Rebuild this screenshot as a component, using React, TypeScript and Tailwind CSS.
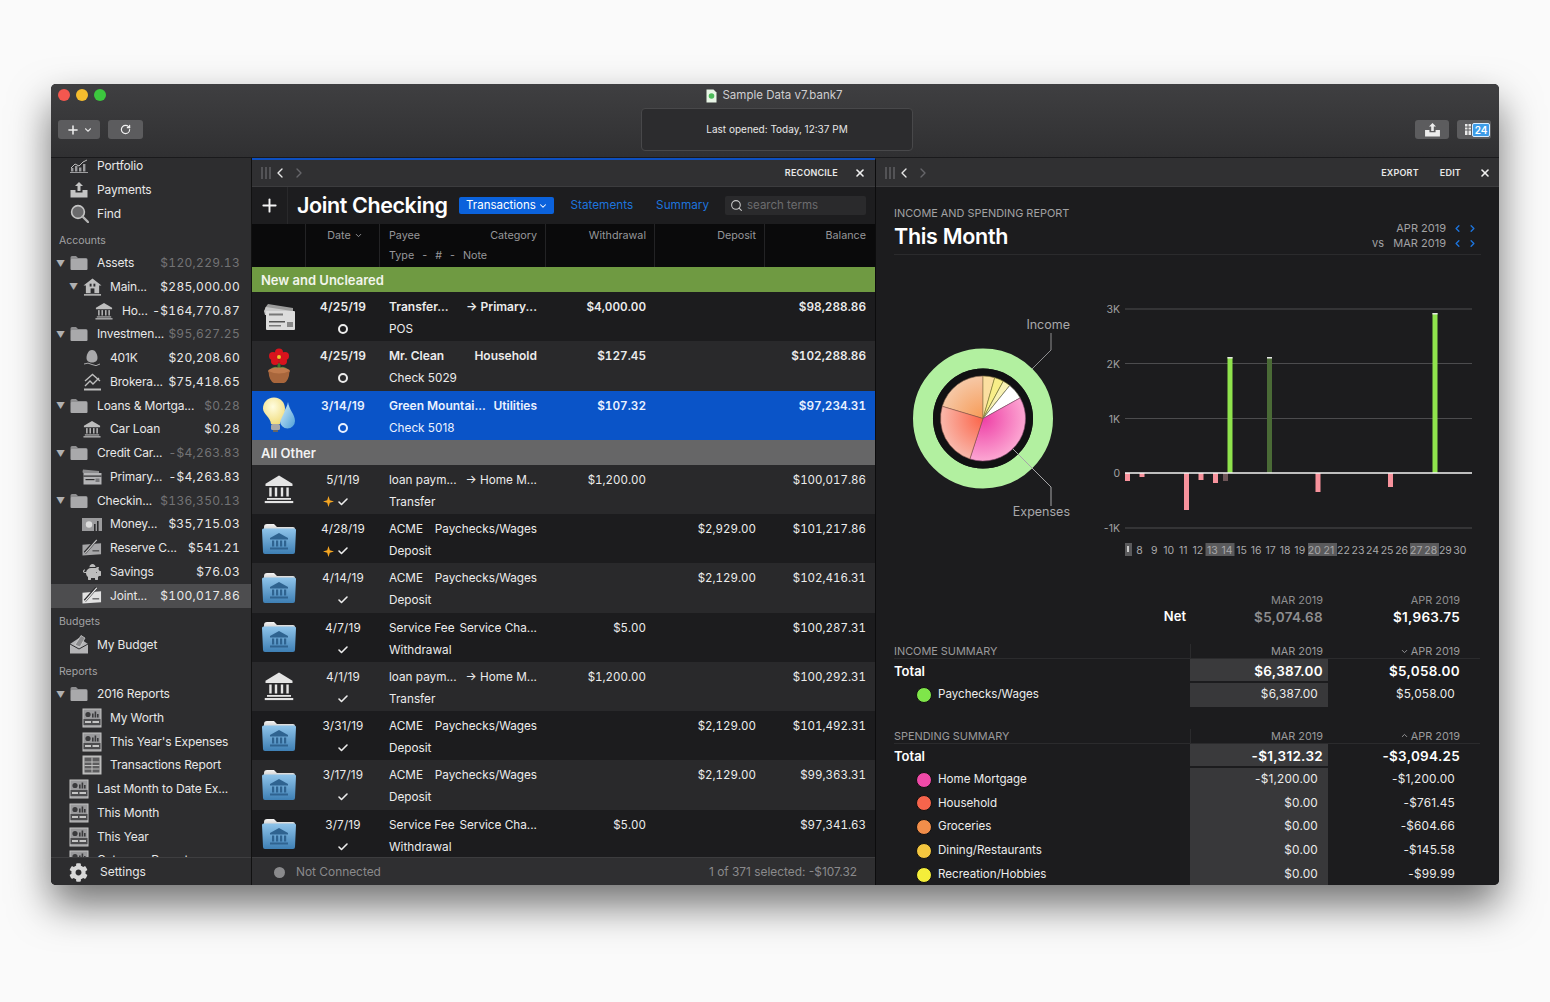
import { ChevronDown, ChevronLeft, ChevronRight, ChevronUp, Check, Plus, RotateCw, Search, X } from 'lucide-react'
import { FaCog, FaPiggyBank } from 'react-icons/fa'

const Temple = ({ color = '#bdbdbd', size = 18 }: { color?: string; size?: number }) => (
  <svg width={size} height={size} viewBox="0 0 20 20" fill={color}>
    <path d="M10 1 19 6.5V8H1V6.5Z" />
    <rect x="3.5" y="9" width="1.6" height="6" />
    <rect x="7.2" y="9" width="1.6" height="6" />
    <rect x="11.2" y="9" width="1.6" height="6" />
    <rect x="14.9" y="9" width="1.6" height="6" />
    <rect x="2" y="16" width="16" height="1.2" />
    <rect x="0.5" y="18" width="19" height="1.4" />
  </svg>
)

const Folder = () => (
  <svg width="18" height="16" viewBox="0 0 18 16">
    <path d="M0.5 2.5Q0.5 1 2 1H6L8 3H16Q17.5 3 17.5 4.5V4.5H0.5Z" fill="#8e8e90" />
    <rect x="0.5" y="4" width="17" height="11" rx="1" fill="#a9a9ab" />
  </svg>
)

const ReportIcon = () => (
  <svg width="20" height="20" viewBox="0 0 20 20">
    <rect x="0.5" y="0.5" width="19" height="19" fill="#c4c4c4" />
    <rect x="1.5" y="1.5" width="17" height="17" fill="#99999b" />
    <circle cx="6" cy="6.5" r="2.6" fill="#3a3a3c" />
    <rect x="10" y="5.5" width="1.6" height="4" fill="#3a3a3c" />
    <rect x="12.6" y="3.5" width="1.6" height="6" fill="#3a3a3c" />
    <rect x="15" y="6" width="1.6" height="3.5" fill="#3a3a3c" />
    <rect x="1.5" y="11" width="17" height="6" fill="#4c4c4e" />
    <rect x="3" y="13" width="6" height="2" fill="#c4c4c4" />
    <rect x="10.5" y="13" width="6.5" height="2" fill="#c4c4c4" />
  </svg>
)

const TableIcon = () => (
  <svg width="20" height="20" viewBox="0 0 20 20">
    <rect x="0.5" y="0.5" width="19" height="19" fill="#bcbcbc" />
    <rect x="2.5" y="2.5" width="15" height="15" fill="#5c5c5e" />
    <path d="M2.5 7H17.5M2.5 10.5H17.5M2.5 14H17.5M10 2.5V17.5" stroke="#bcbcbc" strokeWidth="1" />
  </svg>
)

const CheckbookIcon = ({ bright }: { bright?: boolean }) => (
  <svg width="21" height="18" viewBox="0 0 21 18">
    <path d="M0.5 5.5 20 4V15.5L0.5 17Z" fill={bright ? '#e2e2e2' : '#a6a6a8'} />
    <path d="M3 14 15 0.5" stroke="#2d2d2f" strokeWidth="3" />
    <path d="M3.5 14 15.5 0.5" stroke={bright ? '#f2f2f2' : '#c9c9c9'} strokeWidth="1.2" />
    <path d="M11 12H18" stroke="#2d2d2f" strokeWidth="1" />
  </svg>
)

const SideIcon = ({ name }: { name: string }) => {
  switch (name) {
    case 'folder':
      return <Folder />
    case 'bank':
      return <Temple />
    case 'house':
      return (
        <svg width="19" height="18" viewBox="0 0 20 19" fill="#bdbdbd">
          <path d="M10 0.5 19.5 8H17V16H3V8H0.5Z" />
          <rect x="7" y="6" width="2" height="3" fill="#2d2d2f" />
          <rect x="11" y="6" width="2" height="3" fill="#2d2d2f" />
          <rect x="8" y="11" width="4" height="5" fill="#2d2d2f" />
          <rect x="1" y="17" width="18" height="1.6" />
        </svg>
      )
    case 'portfolio':
      return (
        <svg width="18" height="14" viewBox="0 0 18 14" fill="#9c9c9e">
          <path d="M1 9 5 5 9 7 13 3 17 1" stroke="#bdbdbd" strokeWidth="1" fill="none" />
          <rect x="1" y="9" width="2.4" height="3.5" />
          <rect x="5" y="7" width="2.4" height="5.5" />
          <rect x="9" y="8.5" width="2.4" height="4" />
          <rect x="13" y="5" width="2.4" height="7.5" />
          <rect x="0" y="13" width="18" height="1" />
        </svg>
      )
    case 'payments':
      return (
        <svg width="18" height="16" viewBox="0 0 18 16" fill="#c4c4c4">
          <path d="M9 0 13 4H10.5V9H7.5V4H5Z" />
          <path d="M0.5 8H5.5V10.5H12.5V8H17.5V15.5H0.5Z" />
        </svg>
      )
    case 'find':
      return (
        <svg width="19" height="19" viewBox="0 0 19 19">
          <circle cx="8" cy="8" r="6.4" fill="#6a6a6c" stroke="#c4c4c4" strokeWidth="1.6" />
          <path d="M12.5 12.5 18 18" stroke="#b4b4b4" strokeWidth="2.4" strokeLinecap="round" />
        </svg>
      )
    case 'egg':
      return (
        <svg width="18" height="18" viewBox="0 0 18 18" fill="#a9a9ab">
          <path d="M9 1C13 1 14.5 6 14.5 9C14.5 12 12 13.5 9 13.5C6 13.5 3.5 12 3.5 9C3.5 6 5 1 9 1Z" />
          <path d="M1 15Q5 13 9 15.5T17 15" stroke="#a9a9ab" fill="none" />
        </svg>
      )
    case 'broker':
      return (
        <svg width="19" height="18" viewBox="0 0 19 18" fill="none" stroke="#bdbdbd" strokeWidth="1.4">
          <path d="M2 8 9.5 1.5 17 8" />
          <path d="M2 13 7 8 10 11 16 5" />
          <path d="M1 16.5H18" strokeWidth="2" />
        </svg>
      )
    case 'card':
      return (
        <svg width="20" height="16" viewBox="0 0 20 16">
          <path d="M0.5 3 1 0.5 17 2V4H1Z" fill="#8c8c8e" />
          <rect x="1.5" y="4" width="18" height="11.5" fill="#b4b4b6" />
          <rect x="1.5" y="6.5" width="18" height="1.2" fill="#2d2d2f" />
          <rect x="3.5" y="10" width="9" height="1.2" fill="#2d2d2f" />
          <rect x="13.5" y="9.5" width="4" height="3.5" fill="#77777a" />
        </svg>
      )
    case 'money':
      return (
        <svg width="20" height="15" viewBox="0 0 20 15">
          <rect x="0" y="1" width="20" height="13" fill="#9c9c9e" />
          <circle cx="7" cy="7.5" r="3.2" fill="#dcdcdc" />
          <rect x="12" y="7" width="1.6" height="7" fill="#2d2d2f" />
          <rect x="15" y="4" width="1.6" height="10" fill="#2d2d2f" />
        </svg>
      )
    case 'check':
      return <CheckbookIcon />
    case 'checkOn':
      return <CheckbookIcon bright />
    case 'piggy':
      return <FaPiggyBank size={18} color="#bdbdbd" />
    case 'budget':
      return (
        <svg width="20" height="20" viewBox="0 0 20 20">
          <path d="M1 9 10 3 19 9V18.5H1Z" fill="#b4b4b6" />
          <path d="M1 9 10 14 19 9" stroke="#2d2d2f" fill="none" />
          <path d="M6 10 12 0.5 16 3 11 12Z" fill="#8a8a8c" stroke="#d6d6d6" strokeWidth="0.7" />
        </svg>
      )
    case 'report':
      return <ReportIcon />
    case 'table':
      return <TableIcon />
    default:
      return null
  }
}

type SideRow = { label?: string; amount?: string; level?: 0 | 1 | 2; icon?: string; arrow?: boolean; dim?: boolean; head?: string; on?: boolean }

const sideRows: SideRow[] = [
  { label: 'Portfolio', icon: 'portfolio' },
  { label: 'Payments', icon: 'payments' },
  { label: 'Find', icon: 'find' },
  { head: 'Accounts' },
  { label: 'Assets', amount: '$120,229.13', icon: 'folder', arrow: true, dim: true },
  { label: 'Main...', amount: '$285,000.00', icon: 'house', arrow: true, level: 1 },
  { label: 'Ho...', amount: '-$164,770.87', icon: 'bank', level: 2 },
  { label: 'Investmen...', amount: '$95,627.25', icon: 'folder', arrow: true, dim: true },
  { label: '401K', amount: '$20,208.60', icon: 'egg', level: 1 },
  { label: 'Brokera...', amount: '$75,418.65', icon: 'broker', level: 1 },
  { label: 'Loans & Mortga...', amount: '$0.28', icon: 'folder', arrow: true, dim: true },
  { label: 'Car Loan', amount: '$0.28', icon: 'bank', level: 1 },
  { label: 'Credit Car...', amount: '-$4,263.83', icon: 'folder', arrow: true, dim: true },
  { label: 'Primary...', amount: '-$4,263.83', icon: 'card', level: 1 },
  { label: 'Checkin...', amount: '$136,350.13', icon: 'folder', arrow: true, dim: true },
  { label: 'Money...', amount: '$35,715.03', icon: 'money', level: 1 },
  { label: 'Reserve C...', amount: '$541.21', icon: 'check', level: 1 },
  { label: 'Savings', amount: '$76.03', icon: 'piggy', level: 1 },
  { label: 'Joint...', amount: '$100,017.86', icon: 'checkOn', level: 1, on: true },
  { head: 'Budgets' },
  { label: 'My Budget', icon: 'budget' },
  { head: 'Reports' },
  { label: '2016 Reports', icon: 'folder', arrow: true },
  { label: 'My Worth', icon: 'report', level: 1 },
  { label: "This Year's Expenses", icon: 'report', level: 1 },
  { label: 'Transactions Report', icon: 'table', level: 1 },
  { label: 'Last Month to Date Ex...', icon: 'report' },
  { label: 'This Month', icon: 'report' },
  { label: 'This Year', icon: 'report' },
  { label: 'Category Report', icon: 'report' },
]

const levelPad = ['pl-[5px]', 'pl-[18px]', 'pl-[30px]']

const Sidebar = () => (
  <aside className="w-[201px] shrink-0 flex flex-col bg-[#2d2d2f] border-r border-[#111]">
    <div className="flex-1 min-h-0 overflow-hidden">
      <div className="-mt-[3.5px]">
        {sideRows.map((r, i) =>
          r.head ? (
            <div key={i} className="h-[25.5px] pl-[8px] pt-[4px] flex items-center text-[10.5px] text-[#a2a2a4]">
              {r.head}
            </div>
          ) : (
            <div
              key={i}
              className={`h-[23.75px] flex items-center pr-[11px] text-[12px] ${levelPad[r.level ?? 0]} ${r.on ? 'bg-[#4d4d4f]' : ''}`}
            >
              <span className="w-[15px] shrink-0 text-[9px] leading-none text-[#b0b0b2]">{r.arrow ? '▼' : ''}</span>
              <span className="w-[26px] h-[20px] shrink-0">
                <span className="-ml-[2px] w-[20px] h-[20px] flex items-center justify-center">
                  <SideIcon name={r.icon ?? ''} />
                </span>
              </span>
              <span className="flex-1 whitespace-nowrap tracking-[-0.15px] text-[#e8e8e8]">{r.label}</span>
              {r.amount && (
                <span className={`tabular-nums tracking-[0.3px] ${r.dim ? 'text-[#737375]' : 'text-[#e8e8e8]'}`}>{r.amount}</span>
              )}
            </div>
          ),
        )}
      </div>
    </div>
    <div className="h-[28px] shrink-0 flex items-center pt-[1px] pl-[18px] gap-[12px] bg-[#2d2d2f] border-t border-[#3e3e40] text-[12px] text-[#e8e8e8]">
      <FaCog size={19} color="#d8d8d8" />
      <span>Settings</span>
    </div>
  </aside>
)

const PaneNav = ({ children }: { children: React.ReactNode }) => (
  <div className="h-[27px] shrink-0 flex items-center bg-[#303032] border-b border-[#3c3c3e] pl-[9px] pr-[8px]">
    <svg width="10" height="12" viewBox="0 0 10 12" stroke="#77777a">
      <path d="M1 0V12M5 0V12M9 0V12" />
    </svg>
    <ChevronLeft size={16} strokeWidth={2} color="#e8e8e8" className="ml-[1px]" />
    <ChevronRight size={16} strokeWidth={2} color="#66666a" className="ml-[3px]" />
    <div className="flex-1" />
    {children}
  </div>
)

const CardArt = () => (
  <svg width="33" height="30" viewBox="0 0 33 30">
    <path d="M2 6 5 2 30 6V10H3Z" fill="#9c9c9c" />
    <path d="M1 9 3 5 29 9V13H2Z" fill="#c9c9c9" />
    <rect x="3" y="9" width="29" height="19" rx="1" fill="#dcdcdc" />
    <rect x="6" y="11.5" width="14" height="2" fill="#777" />
    <rect x="6" y="19" width="16" height="1.5" fill="#555" />
    <rect x="6" y="23" width="12" height="1.5" fill="#777" />
    <rect x="24" y="20" width="6" height="5" fill="#888" />
  </svg>
)

const FlowerArt = () => (
  <svg width="26" height="36" viewBox="0 0 26 36">
    <path d="M13 15V22" stroke="#3d7a2c" strokeWidth="3" />
    <path d="M4 22Q9 16 13 21Q17 16 22 22Z" fill="#4f8a3a" />
    <g fill="#d8131d">
      <circle cx="13" cy="4.5" r="4" />
      <circle cx="7" cy="8" r="4" />
      <circle cx="19" cy="8" r="4" />
      <circle cx="9" cy="13" r="4" />
      <circle cx="17" cy="13" r="4" />
    </g>
    <circle cx="13" cy="9" r="2" fill="#f2c12a" />
    <ellipse cx="13" cy="23" rx="11" ry="3.5" fill="#c07a4c" />
    <path d="M2.5 23Q3 33 8 35H18Q23 33 23.5 23Q13 28 2.5 23Z" fill="#a8663c" />
  </svg>
)

const BulbArt = () => (
  <svg width="34" height="38" viewBox="0 0 34 36">
    <defs>
      <radialGradient id="bulbFill" cx="0.45" cy="0.35" r="0.7">
        <stop offset="0" stopColor="#fffde0" />
        <stop offset="1" stopColor="#f0dc7c" />
      </radialGradient>
      <linearGradient id="dropFill" x1="0" y1="0" x2="1" y2="1">
        <stop offset="0" stopColor="#d7f0fa" />
        <stop offset="1" stopColor="#4d9fd8" />
      </linearGradient>
    </defs>
    <path d="M26 5C27 13 33 17 33 24A7.5 7.5 0 0 1 18 24C18 17 25 13 26 5Z" fill="url(#dropFill)" />
    <path d="M12 0.5C19 0.5 23 6 23 11.5C23 17 18.5 20 18 27H9C8.5 20 1 17 1 11.5C1 6 5 0.5 12 0.5Z" fill="url(#bulbFill)" />
    <rect x="9" y="27" width="9" height="6" rx="1.5" fill="#a8a8a8" />
    <rect x="11" y="33" width="5" height="2" fill="#666" />
  </svg>
)

const BlueFolder = () => (
  <svg width="36" height="32" viewBox="0 0 36 32">
    <defs>
      <linearGradient id="folderBlue" x1="0" y1="0" x2="0" y2="1">
        <stop offset="0" stopColor="#8fc4ea" />
        <stop offset="1" stopColor="#3e7fb4" />
      </linearGradient>
      <linearGradient id="folderTop" x1="0" y1="0" x2="0" y2="1">
        <stop offset="0" stopColor="#f4f4f4" />
        <stop offset="1" stopColor="#b9b9b9" />
      </linearGradient>
    </defs>
    <path d="M3 4Q3 1 6 1H13L16 4H32Q34 4 34 6V10H3Z" fill="url(#folderTop)" />
    <path d="M1 7Q1 5.5 2.5 5.5H33.5Q35 5.5 35 7L34 29Q34 31 32 31H4Q2 31 2 29Z" fill="url(#folderBlue)" />
    <g fill="#2f6390">
      <path d="M18 10 27 15V16.5H9V15Z" />
      <rect x="11" y="17.5" width="2.2" height="6" />
      <rect x="15" y="17.5" width="2.2" height="6" />
      <rect x="19" y="17.5" width="2.2" height="6" />
      <rect x="23" y="17.5" width="2.2" height="6" />
      <rect x="9" y="24.5" width="18" height="2" />
    </g>
  </svg>
)

type Tx = {
  icon: 'card' | 'flower' | 'bulb' | 'bank' | 'folder'
  date: string
  payee: string
  cat: string
  arrow?: boolean
  note: string
  wd?: string
  dep?: string
  bal: string
  mark: 'ring' | 'check' | 'star'
  bold?: boolean
  sel?: boolean
  light?: boolean
}

const newTx: Tx[] = [
  { icon: 'card', date: '4/25/19', payee: 'Transfer...', cat: 'Primary...', arrow: true, note: 'POS', wd: '$4,000.00', bal: '$98,288.86', mark: 'ring', bold: true },
  { icon: 'flower', date: '4/25/19', payee: 'Mr. Clean', cat: 'Household', note: 'Check 5029', wd: '$127.45', bal: '$102,288.86', mark: 'ring', bold: true, light: true },
  { icon: 'bulb', date: '3/14/19', payee: 'Green Mountai...', cat: 'Utilities', note: 'Check 5018', wd: '$107.32', bal: '$97,234.31', mark: 'ring', bold: true, sel: true },
]

const otherTx: Tx[] = [
  { icon: 'bank', date: '5/1/19', payee: 'loan paym...', cat: 'Home M...', arrow: true, note: 'Transfer', wd: '$1,200.00', bal: '$100,017.86', mark: 'star', light: true },
  { icon: 'folder', date: '4/28/19', payee: 'ACME', cat: 'Paychecks/Wages', note: 'Deposit', dep: '$2,929.00', bal: '$101,217.86', mark: 'star' },
  { icon: 'folder', date: '4/14/19', payee: 'ACME', cat: 'Paychecks/Wages', note: 'Deposit', dep: '$2,129.00', bal: '$102,416.31', mark: 'check', light: true },
  { icon: 'folder', date: '4/7/19', payee: 'Service Fee', cat: 'Service Cha...', note: 'Withdrawal', wd: '$5.00', bal: '$100,287.31', mark: 'check' },
  { icon: 'bank', date: '4/1/19', payee: 'loan paym...', cat: 'Home M...', arrow: true, note: 'Transfer', wd: '$1,200.00', bal: '$100,292.31', mark: 'check', light: true },
  { icon: 'folder', date: '3/31/19', payee: 'ACME', cat: 'Paychecks/Wages', note: 'Deposit', dep: '$2,129.00', bal: '$101,492.31', mark: 'check' },
  { icon: 'folder', date: '3/17/19', payee: 'ACME', cat: 'Paychecks/Wages', note: 'Deposit', dep: '$2,129.00', bal: '$99,363.31', mark: 'check', light: true },
  { icon: 'folder', date: '3/7/19', payee: 'Service Fee', cat: 'Service Cha...', note: 'Withdrawal', wd: '$5.00', bal: '$97,341.63', mark: 'check' },
]

const TxRow = ({ t }: { t: Tx }) => {
  const rowBg = t.sel ? 'bg-[#0a54c8]' : t.light ? 'bg-[#29292b]' : 'bg-[#1c1c1e]'
  const weight = t.bold ? 'font-semibold text-[12px]' : 'font-normal text-[11.75px]'
  const money = t.bold ? 'font-semibold text-[11.75px]' : 'font-normal text-[11.5px]'
  const ink = t.sel ? 'text-[#eaf2ff]' : 'text-[#ececec]'
  return (
    <div className={`h-[49.25px] shrink-0 grid grid-cols-[54px_74px_166px_109px_110px_110px] pt-[4px] text-[11.75px] ${rowBg} ${ink}`}>
      <div className="-mt-[4px] h-[49px] flex items-center justify-center">
        {t.icon === 'card' && <CardArt />}
        {t.icon === 'flower' && <FlowerArt />}
        {t.icon === 'bulb' && <BulbArt />}
        {t.icon === 'bank' && <Temple color="#e4e4e4" size={30} />}
        {t.icon === 'folder' && <BlueFolder />}
      </div>
      <div className="flex flex-col items-center">
        <div className={`h-[22px] leading-[22px] tracking-[0.2px] ${weight}`}>{t.date}</div>
        <div className="h-[22px] flex items-center justify-center">
          {t.mark === 'ring' ? (
            <span className={`w-[10px] h-[10px] rounded-full border-2 ${t.sel ? 'border-[#eaf2ff]' : 'border-[#ececec]'}`} />
          ) : (
            <>
              <span className="w-[17px] flex justify-center">
                {t.mark === 'star' && (
                  <svg width="11" height="11" viewBox="0 0 11 11" fill="#f5a623">
                    <path d="M5.5 0 6.8 4.2 11 5.5 6.8 6.8 5.5 11 4.2 6.8 0 5.5 4.2 4.2Z" />
                  </svg>
                )}
              </span>
              <Check size={12} strokeWidth={3.2} color="#ececec" />
              <span className="w-[17px]" />
            </>
          )}
        </div>
      </div>
      <div className="px-[9px]">
        <div className={`h-[22px] leading-[22px] flex justify-between whitespace-nowrap ${weight}`}>
          <span>{t.payee}</span>
          <span>{t.arrow ? '→ ' : ''}{t.cat}</span>
        </div>
        <div className="h-[22px] leading-[22px]">{t.note}</div>
      </div>
      <div className={`pr-[9px] text-right leading-[22px] tabular-nums ${money}`}>{t.wd}</div>
      <div className={`pr-[9px] text-right leading-[22px] tabular-nums ${money}`}>{t.dep}</div>
      <div className={`pr-[9px] text-right leading-[22px] tabular-nums ${money}`}>{t.bal}</div>
    </div>
  )
}

const Register = () => (
  <section className="w-[623px] shrink-0 flex flex-col border-t-2 border-[#0d4fc0] min-h-0">
    <PaneNav>
      <span className="text-[9px] font-semibold tracking-[0.2px] text-[#e8e8e8]">RECONCILE</span>
      <X size={12} strokeWidth={3.2} color="#f0f0f0" className="ml-[16px] mr-[1px]" />
    </PaneNav>
    <div className="h-[37px] shrink-0 flex items-center bg-[#1d1d1f]">
      <div className="w-[36px] h-full flex items-center justify-center border-r border-[#29292b]">
        <Plus size={21} strokeWidth={2.2} color="#f4f4f4" />
      </div>
      <h1 className="ml-[9px] text-[21.5px] font-semibold tracking-[-0.4px] text-white whitespace-nowrap">Joint Checking</h1>
      <div className="ml-[12px] h-[17px] w-[95px] flex items-center justify-center gap-[2px] rounded-[2px] bg-[#0b62dc] text-[11.5px] text-white">
        Transactions
        <ChevronDown size={10} strokeWidth={2.5} />
      </div>
      <span className="ml-[16px] text-[11.75px] text-[#1d74dc]">Statements</span>
      <span className="ml-[23px] text-[11.75px] text-[#1d74dc]">Summary</span>
      <div className="ml-[16px] w-[141px] h-[19px] flex items-center gap-[4px] pl-[5px] rounded-[2px] bg-[#2a2a2c] text-[11.5px] text-[#6c6c6e]">
        <Search size={13} color="#c8c8c8" />
        search terms
      </div>
    </div>
    <div className="h-[43px] shrink-0 grid grid-cols-[54px_74px_166px_109px_110px_110px] bg-[#0a0a0b] text-[10.75px] leading-[16px] text-[#97979a]">
      <div className="border-r border-[#232325]" />
      <div className="border-r border-[#232325] flex justify-center gap-[3px] pt-[4px] pl-[5px]">
        Date
        <ChevronDown size={9} strokeWidth={2.5} className="mt-[3px]" />
      </div>
      <div className="border-r border-[#232325] pl-[9px] pr-[8px] pt-[4px]">
        <div className="flex justify-between">
          <span>Payee</span>
          <span>Category</span>
        </div>
        <div className="mt-[4px] flex gap-[8px]">
          <span>Type</span>
          <span>-</span>
          <span>#</span>
          <span>-</span>
          <span>Note</span>
        </div>
      </div>
      <div className="border-r border-[#232325] pr-[8px] pt-[4px] text-right">Withdrawal</div>
      <div className="border-r border-[#232325] pr-[8px] pt-[4px] text-right">Deposit</div>
      <div className="pr-[9px] pt-[4px] text-right">Balance</div>
    </div>
    <div className="flex-1 min-h-0 overflow-hidden">
      <div className="h-[25px] flex items-center pt-[2px] pl-[9px] bg-[#6f9a42] text-[13px] font-semibold text-[#f2f5ec]">New and Uncleared</div>
      {newTx.map((t, i) => (
        <TxRow key={i} t={t} />
      ))}
      <div className="h-[25px] flex items-center pt-[2px] pl-[9px] bg-[#666667] text-[13px] font-semibold text-[#f2f2f2]">All Other</div>
      {otherTx.map((t, i) => (
        <TxRow key={i} t={t} />
      ))}
    </div>
    <div className="h-[28px] shrink-0 flex items-center pt-[1px] pl-[22px] pr-[18px] bg-[#2f2f31] text-[11.9px] text-[#8a8a8c] border-t border-[#3c3c3e]">
      <span className="w-[11px] h-[11px] rounded-full bg-[#8a8a8c]" />
      <span className="ml-[11px] flex-1">Not Connected</span>
      <span>1 of 371 selected: -$107.32</span>
    </div>
  </section>
)

const polar = (a: number, r: number) => {
  const t = ((a - 90) * Math.PI) / 180
  return `${(983 + r * Math.cos(t)).toFixed(2)} ${(418.5 + r * Math.sin(t)).toFixed(2)}`
}

const wedge = (a0: number, a1: number) =>
  `M983 418.5L${polar(a0, 42.5)}A42.5 42.5 0 ${a1 - a0 > 180 ? 1 : 0} 1 ${polar(a1, 42.5)}Z`

const wedges = [
  { a0: 286.6, a1: 360, fill: 'url(#gPeach)', line: '#8a6a50' },
  { a0: 0, a1: 16, fill: '#fbdfa0', line: '#8a7a40' },
  { a0: 16, a1: 28.5, fill: '#f8ee88', line: '#7a7a30' },
  { a0: 28.5, a1: 39, fill: '#f8f2b4', line: '#6a6a30' },
  { a0: 39, a1: 61, fill: '#ffffff', line: '#6a6a50' },
  { a0: 61, a1: 198, fill: 'url(#gPink)', line: '#8a4a70' },
  { a0: 198, a1: 286.6, fill: 'url(#gCoral)', line: '#8a5548' },
]

const days = Array.from({ length: 23 }, (_, i) => i + 8)
const dayX = (d: number) => 1139.6 + (d - 8) * 14.56

const bars = [
  { x: 1125, y0: 473, y1: 481, c: '#f7929c' },
  { x: 1139.5, y0: 473, y1: 477, c: '#f7929c' },
  { x: 1184, y0: 473, y1: 510, c: '#f7929c' },
  { x: 1198.5, y0: 473, y1: 480, c: '#f7929c' },
  { x: 1213, y0: 473, y1: 483, c: '#f7929c' },
  { x: 1223, y0: 473, y1: 481, c: '#6e5558' },
  { x: 1227.5, y0: 357, y1: 473, c: '#8fe34c' },
  { x: 1267, y0: 357, y1: 473, c: '#4a6a36' },
  { x: 1315.5, y0: 473, y1: 492, c: '#f7929c' },
  { x: 1388, y0: 473, y1: 487, c: '#f7929c' },
  { x: 1432.5, y0: 313, y1: 473, c: '#8fe34c' },
]

const Charts = () => (
  <svg width="623" height="330" viewBox="876 260 623 330" className="block shrink-0 mt-[5px]" fontFamily="Inter, sans-serif">
    <defs>
      <radialGradient id="gPeach" gradientUnits="userSpaceOnUse" cx="983" cy="418.5" r="42.5">
        <stop offset="0" stopColor="#f79a55" />
        <stop offset="1" stopColor="#f6c8a6" />
      </radialGradient>
      <radialGradient id="gPink" gradientUnits="userSpaceOnUse" cx="983" cy="418.5" r="42.5">
        <stop offset="0" stopColor="#ee3fa6" />
        <stop offset="1" stopColor="#fca6d2" />
      </radialGradient>
      <radialGradient id="gCoral" gradientUnits="userSpaceOnUse" cx="983" cy="418.5" r="42.5">
        <stop offset="0" stopColor="#fb6449" />
        <stop offset="1" stopColor="#f9b8ab" />
      </radialGradient>
    </defs>
    <circle cx="983" cy="418.5" r="60" fill="none" stroke="#b2f0a0" strokeWidth="20" />
    <circle cx="983" cy="418.5" r="50" fill="#111113" />
    {wedges.map((w, i) => (
      <path key={i} d={wedge(w.a0, w.a1)} fill={w.fill} stroke={w.line} strokeWidth="0.6" />
    ))}
    <path d="M1051 333V350L1032 369" fill="none" stroke="#8e8e90" />
    <path d="M1051 506V487L1013 449" fill="none" stroke="#a6a6a8" />
    <text x="1070" y="329" textAnchor="end" fontSize="12.5" fill="#a8a8aa">Income</text>
    <text x="1070" y="516" textAnchor="end" fontSize="12.5" fill="#a8a8aa">Expenses</text>

    {[
      { y: 309, t: '3K' },
      { y: 363.5, t: '2K' },
      { y: 418.5, t: '1K' },
      { y: 528, t: '-1K' },
    ].map((g) => (
      <g key={g.t}>
        <line x1="1125" x2="1472" y1={g.y} y2={g.y} stroke="#4c4c4e" />
        <text x="1120" y={g.y + 4} textAnchor="end" fontSize="10.5" fill="#a0a0a2">{g.t}</text>
      </g>
    ))}
    <text x="1120" y="477" textAnchor="end" fontSize="10.5" fill="#a0a0a2">0</text>
    {bars.map((b, i) => (
      <g key={i}>
        <rect x={b.x} y={b.y0} width="5" height={b.y1 - b.y0} fill={b.c} />
        {b.y1 === 473 && <rect x={b.x} y={b.y0} width="5" height="1.5" fill="#e6e6e6" />}
      </g>
    ))}
    <line x1="1125" x2="1472" y1="473" y2="473" stroke="#f4f4f4" strokeWidth="1.4" />
    <rect x="1125" y="543" width="7" height="13" fill="#5a5a5c" />
    <rect x="1205.5" y="543" width="29" height="13" fill="#5a5a5c" />
    <rect x="1308" y="543" width="29" height="13" fill="#5a5a5c" />
    <rect x="1410" y="543" width="29" height="13" fill="#5a5a5c" />
    {days.map((d) => (
      <text key={d} x={dayX(d)} y="553.5" textAnchor="middle" fontSize="10.5" fill="#a8a8aa">{d}</text>
    ))}
    <rect x="1127" y="546" width="2" height="6" fill="#c8c8c8" />
  </svg>
)

const cols = 'grid grid-cols-[296px_138px_152px]'

const SummaryHead = ({ title, sort }: { title: string; sort?: 'down' | 'up' }) => (
  <div className={`${cols} h-[15px] items-end border-b border-[#2b2b2d] text-[10.9px] leading-[14px] text-[#9a9a9c]`}>
    <span>{title}</span>
    <span className="text-right pr-[5px] border-l border-[#2b2b2d]">MAR 2019</span>
    <span className="flex items-center justify-end gap-[2px] pr-[20px]">
      {sort === 'down' && <ChevronDown size={9} strokeWidth={2.5} />}
      {sort === 'up' && <ChevronUp size={9} strokeWidth={2.5} />}
      APR 2019
    </span>
  </div>
)

const TotalRow = ({ a, b }: { a: string; b: string }) => (
  <div className={`${cols} h-[24px] items-center pt-[1px] text-[13.5px] font-semibold text-white`}>
    <span className="text-[13px]">Total</span>
    <span className="h-[22px] -mt-[1px] self-start flex items-center justify-end pt-[3px] pr-[5px] bg-[#3a3a3c] tracking-[0.3px]">{a}</span>
    <span className="text-right pr-[20px] tracking-[0.3px]">{b}</span>
  </div>
)

const CatRow = ({ dot, name, a, b }: { dot: string; name: string; a: string; b: string }) => (
  <div className={`${cols} h-[23.75px] items-center text-[11.8px] text-[#ececec]`}>
    <span className="flex items-center pl-[22px] gap-[6px] text-[11.6px]">
      <span className={`w-[16px] h-[16px] rounded-full border border-[#111] ${dot}`} />
      {name}
    </span>
    <span className="h-full flex items-center justify-end pr-[10px] bg-[#38383a] tracking-[0.2px]">{a}</span>
    <span className="text-right pr-[25px] tracking-[0.2px]">{b}</span>
  </div>
)

const Report = () => (
  <section className="flex-1 min-w-0 flex flex-col border-l border-t-2 border-l-[#0c0c0d] border-t-[#303032] bg-[#1c1c1e] overflow-hidden">
    <PaneNav>
      <span className="text-[9px] font-semibold tracking-[0.2px] text-[#e8e8e8]">EXPORT</span>
      <span className="ml-[21px] text-[9px] font-semibold tracking-[0.2px] text-[#e8e8e8]">EDIT</span>
      <X size={12} strokeWidth={3.2} color="#f0f0f0" className="ml-[18px]" />
    </PaneNav>
    <div className="mx-[18px] mt-[19px] h-[49px] shrink-0 flex justify-between border-b border-[#2b2b2d]">
      <div>
        <div className="text-[10.9px] leading-[14px] text-[#a2a2a4]">INCOME AND SPENDING REPORT</div>
        <div className="mt-[1px] text-[21.5px] leading-[30px] font-semibold tracking-[-0.3px] text-white">This Month</div>
      </div>
      <div className="pt-[15px] text-[11px] leading-[15px] text-[#a2a2a4]">
        <div className="flex items-center justify-end">
          APR 2019
          <ChevronLeft size={11} strokeWidth={3} color="#1d74dc" className="ml-[6px]" />
          <ChevronRight size={11} strokeWidth={3} color="#1d74dc" className="ml-[4px] mr-[3px]" />
        </div>
        <div className="flex items-center justify-end">
          vs&nbsp;&nbsp; MAR 2019
          <ChevronLeft size={11} strokeWidth={3} color="#1d74dc" className="ml-[6px]" />
          <ChevronRight size={11} strokeWidth={3} color="#1d74dc" className="ml-[4px] mr-[3px]" />
        </div>
      </div>
    </div>
    <Charts />
    <div className="mx-[18px] mt-[3px] w-[586px]">
      <div className={`${cols} text-[10.9px] leading-[14px] text-[#8e8e90]`}>
        <span />
        <span className="text-right pr-[5px]">MAR 2019</span>
        <span className="text-right pr-[20px]">APR 2019</span>
      </div>
      <div className={`${cols} h-[17px] items-center text-[13.5px] font-semibold`}>
        <span className="text-right pr-[4px] text-[13px] text-white">Net</span>
        <span className="text-right pr-[5px] text-[#8e8e90] tracking-[0.3px]">$5,074.68</span>
        <span className="text-right pr-[20px] text-white tracking-[0.3px]">$1,963.75</span>
      </div>
      <div className="h-[20px]" />
      <div>
        <SummaryHead title="INCOME SUMMARY" sort="down" />
        <TotalRow a="$6,387.00" b="$5,058.00" />
        <CatRow dot="bg-[#7fe64a]" name="Paychecks/Wages" a="$6,387.00" b="$5,058.00" />
      </div>
      <div className="mt-[22px]">
        <SummaryHead title="SPENDING SUMMARY" sort="up" />
        <TotalRow a="-$1,312.32" b="-$3,094.25" />
        <CatRow dot="bg-[#ef4aa8]" name="Home Mortgage" a="-$1,200.00" b="-$1,200.00" />
        <CatRow dot="bg-[#f6644c]" name="Household" a="$0.00" b="-$761.45" />
        <CatRow dot="bg-[#f28e4a]" name="Groceries" a="$0.00" b="-$604.66" />
        <CatRow dot="bg-[#f4c63f]" name="Dining/Restaurants" a="$0.00" b="-$145.58" />
        <CatRow dot="bg-[#f4ee3a]" name="Recreation/Hobbies" a="$0.00" b="-$99.99" />
      </div>
    </div>
  </section>
)

const TitleBar = () => (
  <header className="h-[74px] shrink-0 bg-gradient-to-b from-[#3f3f41] to-[#303032] border-b border-[#1a1a1c]">
    <div className="h-[22px] grid grid-cols-[1fr_auto_1fr] items-center pl-[7px] pr-[8px]">
      <div className="flex gap-[6px]">
        <span className="w-[12px] h-[12px] rounded-full bg-[#f4574f]" />
        <span className="w-[12px] h-[12px] rounded-full bg-[#f5bd2e]" />
        <span className="w-[12px] h-[12px] rounded-full bg-[#3cc63e]" />
      </div>
      <div className="flex items-center gap-[5px] pt-[1px] text-[11.5px] text-[#cfcfd1]">
        <svg width="11" height="14" viewBox="0 0 11 14">
          <path d="M0.5 0.5H7.5L10.5 3.5V13.5H0.5Z" fill="#e8f5e6" />
          <circle cx="5.5" cy="7" r="2.8" fill="#4cbb5a" />
        </svg>
        Sample Data v7.bank7
      </div>
      <div />
    </div>
    <div className="grid grid-cols-[590px_272px_1fr] items-center h-[43px] mt-[2px]">
      <div className="flex items-center pl-[7px] gap-[8px]">
        <div className="w-[42px] h-[19px] rounded-[3px] bg-[#5c5c5e] flex items-center justify-center gap-[3px]">
          <Plus size={14} strokeWidth={2.6} color="#f0f0f0" />
          <ChevronDown size={10} strokeWidth={2.6} color="#e0e0e0" />
        </div>
        <div className="w-[35px] h-[19px] rounded-[3px] bg-[#5c5c5e] flex items-center justify-center">
          <RotateCw size={11} strokeWidth={2.6} color="#f0f0f0" />
        </div>
      </div>
      <div className="h-[43px] rounded-[4px] bg-[#2c2c2e] border border-[#48484a] flex items-center justify-center text-[10px] text-[#e8e8e8]">
        Last opened: Today, 12:37 PM
      </div>
      <div className="flex items-center justify-end pr-[8px] gap-[8px]">
        <div className="w-[34px] h-[19px] rounded-[3px] bg-[#5c5c5e] flex items-center justify-center">
          <svg width="17" height="14" viewBox="0 0 18 16" fill="#ececec">
            <path d="M9 0 13 4H10.5V9H7.5V4H5Z" />
            <path d="M0.5 8H5.5V10.5H12.5V8H17.5V15.5H0.5Z" />
          </svg>
        </div>
        <div className="w-[34px] h-[19px] rounded-[3px] bg-[#5c5c5e] flex items-center justify-end pr-[1px] gap-[1px]">
          <svg width="6" height="11" viewBox="0 0 6 11" fill="#e8e8e8">
            <rect width="6" height="11" />
            <path d="M0 3H6M0 6H6M3 0V11" stroke="#5c5c5e" />
          </svg>
          <span className="w-[18px] h-[14px] rounded-[2px] bg-[#3d9ce8] border border-[#d8ecff] flex items-center justify-center text-[10px] font-semibold leading-none text-white">24</span>
        </div>
      </div>
    </div>
  </header>
)

const App = () => (
  <div className="w-full h-[1002px] bg-[#fafafa] pt-[84px] overflow-hidden font-[Inter,sans-serif]">
    <div className="mx-auto w-[1448px] h-[801px] flex flex-col rounded-[5px] overflow-hidden bg-[#1c1c1e] shadow-[0_20px_40px_rgba(0,0,0,0.55)]">
      <TitleBar />
      <div className="flex flex-1 min-h-0">
        <Sidebar />
        <Register />
        <Report />
      </div>
    </div>
  </div>
)

export default App
